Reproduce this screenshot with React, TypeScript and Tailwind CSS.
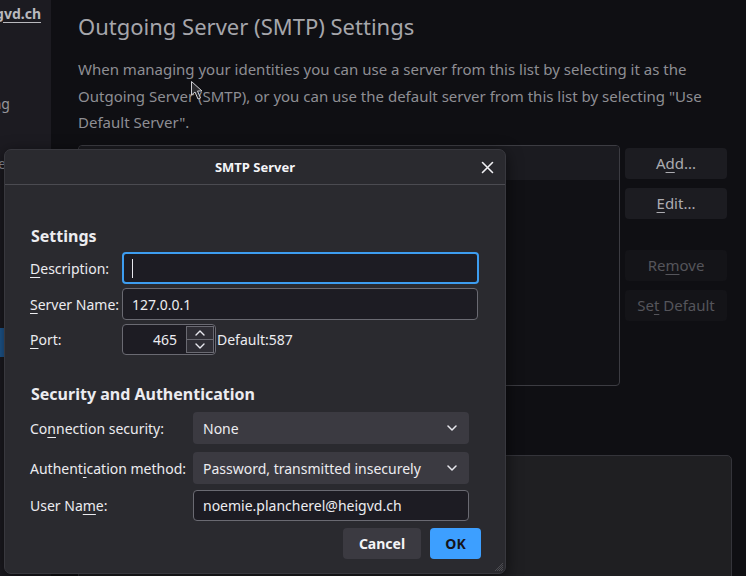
import React from "react";

const U = ({ children }: { children: React.ReactNode }) => (
  <span className="underline underline-offset-[3px] decoration-1">{children}</span>
);

const Chevron = () => (
  <svg width="10" height="6" viewBox="0 0 10 6" fill="none">
    <path d="M1 1l4 4 4-4" stroke="#e8e8ee" strokeWidth="1.5" strokeLinecap="round" strokeLinejoin="round" />
  </svg>
);

export default function App() {
  return (
    <div
      className="relative w-[746px] h-[576px] overflow-hidden bg-[#0f0f13] flex"
      style={{ fontFamily: '"Noto Sans", "Open Sans", sans-serif' }}
    >
      {/* Sidebar */}
      <div className="w-[51px] shrink-0 bg-[#1c1b21] relative overflow-hidden">
        <div className="flex justify-end pr-[10px] mt-[2px] h-[22px] items-center">
          <span className="whitespace-nowrap text-[14px] font-bold text-[#b9b9be] underline underline-offset-[3px]">
            noemie.plancherel@heigvd.ch
          </span>
        </div>
        <div className="flex justify-end pr-[41px] mt-[68px] h-[22px] items-center">
          <span className="whitespace-nowrap text-[14px] text-[#97979c]">Outgoing</span>
        </div>
        <div className="flex justify-end pr-[45px] mt-[38px] h-[22px] items-center">
          <span className="whitespace-nowrap text-[14px] text-[#97979c]">Archive</span>
        </div>
        <div className="mt-[154px] h-[29px] bg-[#1f5b95]" />
      </div>

      {/* Main */}
      <div className="flex-1 pl-[27px] pt-[10px]">
        <h1 className="text-[22px] leading-[32px] text-[#a6a6ab] whitespace-nowrap">
          Outgoing Server (SMTP) Settings
        </h1>
        <p className="mt-[14px] text-[15px] leading-[26.5px] text-[#8e8e93] w-[640px]">
          When managing your identities you can use a server from this list by selecting it as the
          Outgoing Server (SMTP), or you can use the default server from this list by selecting "Use
          Default Server".
        </p>
        <div className="mt-[9px] flex gap-[5px]">
          <div className="w-[542px] h-[241px] border border-[#3c3c42] rounded-[4px] bg-[#111115] overflow-hidden">
            <div className="h-[34px] bg-[#1b1b20]" />
          </div>
          <div className="flex flex-col pt-[3px]">
            <div className="w-[102px] h-[31px] rounded-[4px] bg-[#1c1c21] flex items-center justify-center text-[15px] text-[#acacb1]">
              <span>A<U>d</U>d...</span>
            </div>
            <div className="mt-[9px] w-[102px] h-[31px] rounded-[4px] bg-[#1c1c21] flex items-center justify-center text-[15px] text-[#acacb1]">
              <span><U>E</U>dit...</span>
            </div>
            <div className="mt-[31px] w-[102px] h-[31px] rounded-[4px] bg-[#141418] flex items-center justify-center text-[15px] text-[#55555b]">
              <span>Re<U>m</U>ove</span>
            </div>
            <div className="mt-[9px] w-[102px] h-[31px] rounded-[4px] bg-[#141418] flex items-center justify-center text-[15px] text-[#55555b]">
              <span>Se<U>t</U> Default</span>
            </div>
          </div>
        </div>
        <div className="mt-[69px] w-[654px] h-[130px] bg-[#1f1f22] border border-[#34343a] rounded-[5px]" />
      </div>

      {/* Mouse pointer */}
      <svg className="absolute left-[190px] top-[80px]" width="16" height="22" viewBox="0 0 16 22">
        <path d="M1.5 1.5 L1.5 15 L5 12 L8 19 L10.5 18 L7.5 11 L12 11 Z" fill="#2a2a2e" stroke="#cfcfd4" strokeWidth="1" strokeLinejoin="round" />
      </svg>

      {/* Dialog */}
      <div className="absolute left-[4px] top-[149px] w-[502px] h-[425px] bg-[#2a2a2f] rounded-[7px] border border-[#38383e] shadow-[0_4px_16px_rgba(0,0,0,0.6)] text-[#ececf0] flex flex-col">
        <div className="relative h-[35px] shrink-0 border-b border-[#4b4b51] flex items-center justify-center">
          <span className="text-[13px] font-bold text-[#f4f4f7] mt-[1px]">SMTP Server</span>
          <svg className="absolute right-[11px] top-[11px]" width="13" height="13" viewBox="0 0 13 13">
            <path d="M1.5 1.5l10 10M11.5 1.5l-10 10" stroke="#f0f0f3" strokeWidth="1.6" strokeLinecap="round" />
          </svg>
        </div>

        <div className="pl-[25px] flex flex-col">
          <div className="mt-[40px] h-[22px] text-[16px] font-bold leading-[22px] pl-[1px]">Settings</div>

          <div className="mt-[5px] flex items-center h-[32px]">
            <div className="w-[92px] text-[14px]"><U>D</U>escription:</div>
            <div className="w-[357px] h-[32px] rounded-[4px] border-2 border-[#3d9df0] bg-[#1d1c23] flex items-center pl-[8px]">
              <div className="w-[1px] h-[19px] bg-[#e8e8ee]" />
            </div>
          </div>
          <div className="mt-[4px] flex items-center h-[32px]">
            <div className="w-[92px] text-[14px]"><U>S</U>erver Name:</div>
            <div className="w-[356px] h-[32px] rounded-[4px] border border-[#6a6a72] bg-[#1d1c23] flex items-center pl-[9px] text-[14px]">
              127.0.0.1
            </div>
          </div>
          <div className="mt-[4px] flex items-center h-[31px]">
            <div className="w-[92px] text-[14px]"><U>P</U>ort:</div>
            <div className="w-[94px] h-[31px] rounded-[4px] border border-[#6a6a72] bg-[#1d1c23] flex items-center">
              <div className="flex-1 text-right pr-[9px] text-[14px]">465</div>
              <div className="w-[28px] h-[27px] mr-[1px] border border-[#6a6a72] bg-[#2f2e35] flex flex-col">
                <div className="flex-1 flex items-center justify-center border-b border-[#6a6a72]">
                  <svg width="10" height="6" viewBox="0 0 10 6" fill="none">
                    <path d="M1 5l4-4 4 4" stroke="#e8e8ee" strokeWidth="1.4" strokeLinecap="round" strokeLinejoin="round" />
                  </svg>
                </div>
                <div className="flex-1 flex items-center justify-center">
                  <svg width="10" height="6" viewBox="0 0 10 6" fill="none">
                    <path d="M1 1l4 4 4-4" stroke="#e8e8ee" strokeWidth="1.4" strokeLinecap="round" strokeLinejoin="round" />
                  </svg>
                </div>
              </div>
            </div>
            <div className="text-[14px] pl-[1px]">Default:587</div>
          </div>

          <div className="mt-[28px] h-[22px] text-[16px] font-bold leading-[22px] pl-[1px]">Security and Authentication</div>

          <div className="mt-[7px] flex items-center h-[32px]">
            <div className="w-[163px] text-[14px]">Co<U>n</U>nection security:</div>
            <div className="w-[276px] h-[32px] rounded-[4px] bg-[#3b3a41] flex items-center justify-between pl-[10px] pr-[12px] text-[14px]">
              <span>None</span>
              <Chevron />
            </div>
          </div>
          <div className="mt-[8px] flex items-center h-[32px]">
            <div className="w-[163px] text-[14px]">Authent<U>i</U>cation method:</div>
            <div className="w-[276px] h-[32px] rounded-[4px] bg-[#3b3a41] flex items-center justify-between pl-[10px] pr-[12px] text-[14px]">
              <span>Password, transmitted insecurely</span>
              <Chevron />
            </div>
          </div>
          <div className="mt-[6px] flex items-center h-[31px]">
            <div className="w-[163px] text-[14px]">User Na<U>m</U>e:</div>
            <div className="w-[276px] h-[31px] rounded-[4px] border border-[#6a6a72] bg-[#1d1c23] flex items-center pl-[9px] text-[14px]">
              noemie.plancherel@heigvd.ch
            </div>
          </div>

          <div className="mt-[7px] flex justify-end gap-[9px] pr-[24px]">
            <div className="w-[78px] h-[31px] rounded-[4px] bg-[#3b3a41] flex items-center justify-center text-[14px] font-bold text-[#f4f4f7]">
              Cancel
            </div>
            <div className="w-[51px] h-[31px] rounded-[4px] bg-[#3d9fff] flex items-center justify-center text-[14px] font-bold text-[#15141a]">
              OK
            </div>
          </div>
        </div>

        {/* resize grip */}
        <svg className="absolute right-[1px] bottom-[1px]" width="10" height="10" viewBox="0 0 10 10">
          <path d="M9 3L3 9M9 5L5 9M9 7L7 9M9 1L1 9" stroke="#55555b" strokeWidth="0.8" />
        </svg>
      </div>
    </div>
  );
}
